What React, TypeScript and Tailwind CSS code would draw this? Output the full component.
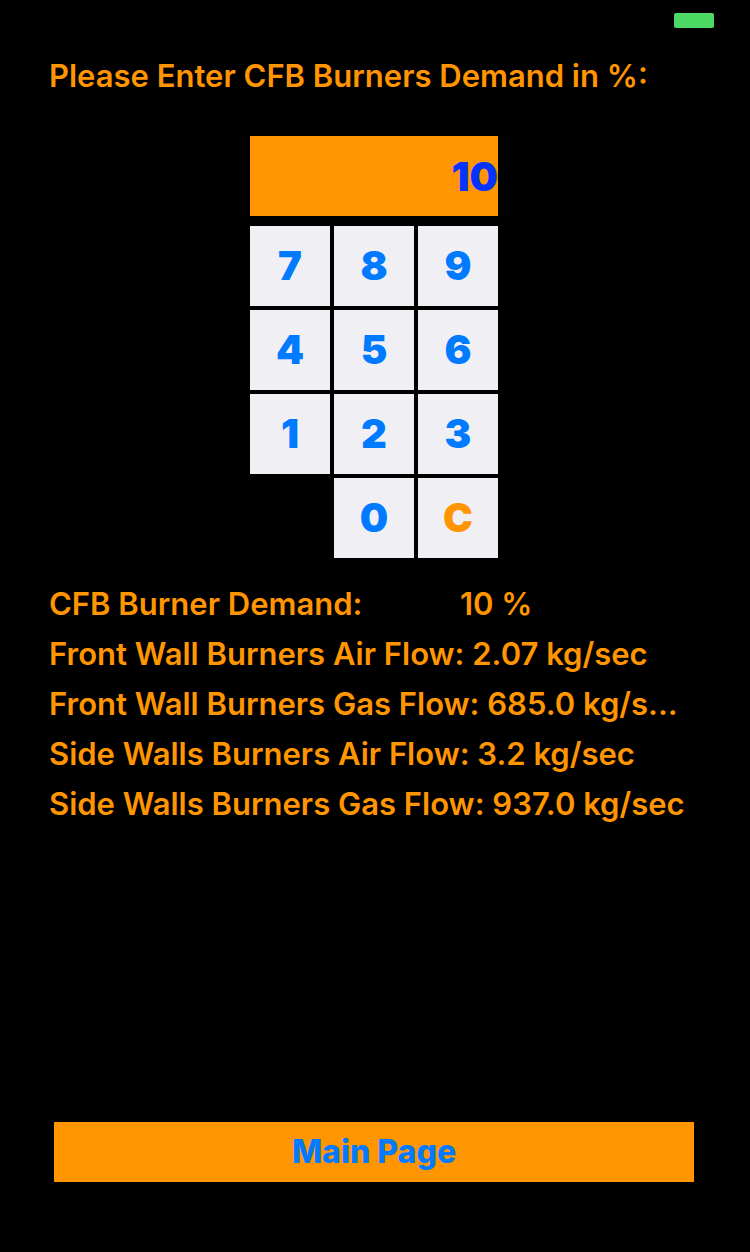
import { useState } from "react";

const keys = ["7", "8", "9", "4", "5", "6", "1", "2", "3", "0", "C"];

export default function App() {
  const [demand, setDemand] = useState("10");

  const press = (key: string) => {
    if (key === "C") setDemand("0");
    else setDemand((value) => (value === "0" ? key : (value + key).slice(0, 3)));
  };

  return (
    <div className="flex min-h-screen flex-col bg-black font-['Inter',sans-serif] text-[31px] leading-[50px] font-semibold text-[#ff9500]">
      <header className="flex h-7 shrink-0 items-end justify-end pr-9">
        <span role="img" aria-label="Battery" className="h-[15px] w-10 rounded-[2px] bg-[#4cd964]" />
      </header>

      <main className="flex grow flex-col pt-[23px] pr-[51px] pl-[49px]">
        <label htmlFor="demand" className="whitespace-nowrap">
          Please Enter CFB Burners Demand in %:
        </label>

        <section className="mx-auto mt-[35px] w-[248px] text-[40px] font-black">
          <input
            id="demand"
            readOnly
            value={demand}
            className="block h-20 w-full bg-[#ff9500] text-right text-[#0433ff] outline-none"
          />
          <div className="mt-[10px] grid grid-cols-3 gap-1">
            {keys.map((key) => (
              <button
                key={key}
                type="button"
                onClick={() => press(key)}
                className={`h-20 bg-[#efeff4] ${
                  key === "C" ? "text-[#ff9500]" : "text-[#007aff]"
                } ${key === "0" ? "col-start-2" : ""}`}
              >
                {key}
              </button>
            ))}
          </div>
        </section>

        <section className="mt-[21px] whitespace-nowrap">
          <div className="flex">
            <p className="w-[411px]">CFB Burner Demand:</p>
            <p>{demand} %</p>
          </div>
          <p>Front Wall Burners Air Flow: 2.07 kg/sec</p>
          <p>Front Wall Burners Gas Flow: 685.0 kg/s...</p>
          <p>Side Walls Burners Air Flow: 3.2 kg/sec</p>
          <p>Side Walls Burners Gas Flow: 937.0 kg/sec</p>
        </section>
      </main>

      <footer className="mb-[70px] pr-14 pl-[54px]">
        <button type="button" className="block h-[60px] w-full bg-[#ff9500] text-[32px] font-extrabold text-[#007aff]">
          Main Page
        </button>
      </footer>
    </div>
  );
}
